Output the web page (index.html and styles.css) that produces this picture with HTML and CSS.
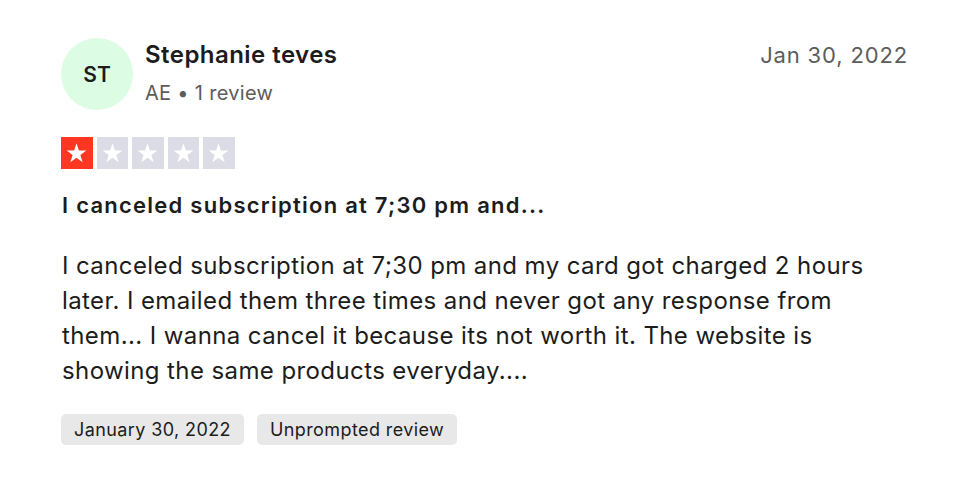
FILE: index.html
```html
<!DOCTYPE html>
<html>
<head>
<meta charset="utf-8">
<link rel="stylesheet" href="styles.css">
</head>
<body>
<article class="review">
  <header class="head">
    <div class="user">
      <div class="avatar">ST</div>
      <div class="meta">
        <div class="name">Stephanie teves</div>
        <div class="sub">AE • 1 review</div>
      </div>
    </div>
    <div class="date">Jan 30, 2022</div>
  </header>
  <div class="stars">
    <span class="star on"><svg viewBox="0 0 24 24"><path d="M12 3.2l2.3 6.9h7.2l-5.8 4.3 2.2 6.9L12 17l-5.9 4.3 2.2-6.9-5.8-4.3h7.2z"/></svg></span>
    <span class="star"><svg viewBox="0 0 24 24"><path d="M12 3.2l2.3 6.9h7.2l-5.8 4.3 2.2 6.9L12 17l-5.9 4.3 2.2-6.9-5.8-4.3h7.2z"/></svg></span>
    <span class="star"><svg viewBox="0 0 24 24"><path d="M12 3.2l2.3 6.9h7.2l-5.8 4.3 2.2 6.9L12 17l-5.9 4.3 2.2-6.9-5.8-4.3h7.2z"/></svg></span>
    <span class="star"><svg viewBox="0 0 24 24"><path d="M12 3.2l2.3 6.9h7.2l-5.8 4.3 2.2 6.9L12 17l-5.9 4.3 2.2-6.9-5.8-4.3h7.2z"/></svg></span>
    <span class="star"><svg viewBox="0 0 24 24"><path d="M12 3.2l2.3 6.9h7.2l-5.8 4.3 2.2 6.9L12 17l-5.9 4.3 2.2-6.9-5.8-4.3h7.2z"/></svg></span>
  </div>
  <h2 class="title">I canceled subscription at 7;30 pm and...</h2>
  <p class="body">I canceled subscription at 7;30 pm and my card got charged 2 hours later. I emailed them three times and never got any response from them... I wanna cancel it because its not worth it. The website is showing the same products everyday....</p>
  <div class="tags">
    <span class="tag">January 30, 2022</span>
    <span class="tag">Unprompted review</span>
  </div>
</article>
</body>
</html>
```
FILE: styles.css
```css
* { box-sizing: border-box; }
html, body { margin: 0; padding: 0; background: #fff; }
body {
  font-family: Inter, "Liberation Sans", Arial, sans-serif;
  color: #1c1c1c;
}
.review {
  padding: 38px 60px 0 61px;
}
.head {
  display: flex;
  justify-content: space-between;
  align-items: flex-start;
}
.user {
  display: flex;
  align-items: center;
  gap: 12px;
}
.avatar {
  width: 72px;
  height: 72px;
  border-radius: 50%;
  background: #dcfce4;
  display: flex;
  align-items: center;
  justify-content: center;
  font-size: 21px;
  font-weight: 600;
  color: #1c1c1c;
}
.meta { display: flex; flex-direction: column; gap: 8px; }
.name {
  font-size: 24px;
  font-weight: 600;
  line-height: 30px;
  letter-spacing: 0.45px;
}
.sub {
  font-size: 20px;
  color: #5c5c5c;
  line-height: 30px;
  letter-spacing: 0.3px;
}
.date {
  font-size: 22px;
  color: #5c5c5c;
  line-height: 30px;
  margin-top: 2px;
  letter-spacing: 0.85px;
}
.stars {
  display: flex;
  gap: 4px;
  margin-top: 27px;
}
.star {
  width: 31.5px;
  height: 31.5px;
  background: #dcdce6;
  display: flex;
  align-items: center;
  justify-content: center;
}
.star.on { background: #ff3722; }
.star svg { width: 25px; height: 25px; fill: #fff; }
.title {
  margin: 19px 0 0 1px;
  font-size: 22px;
  font-weight: 600;
  line-height: 34px;
  letter-spacing: 1.25px;
}
.body {
  margin: 26px 0 0 1px;
  font-size: 24px;
  line-height: 35px;
  letter-spacing: 0.4px;
}
.tags {
  display: flex;
  gap: 13px;
  margin-top: 26px;
}
.tag {
  background: #e8e8e8;
  border-radius: 5px;
  font-size: 18px;
  height: 31px;
  line-height: 31px;
  padding: 0 13px;
  letter-spacing: 0.4px;
  color: #1c1c1c;
}
```
